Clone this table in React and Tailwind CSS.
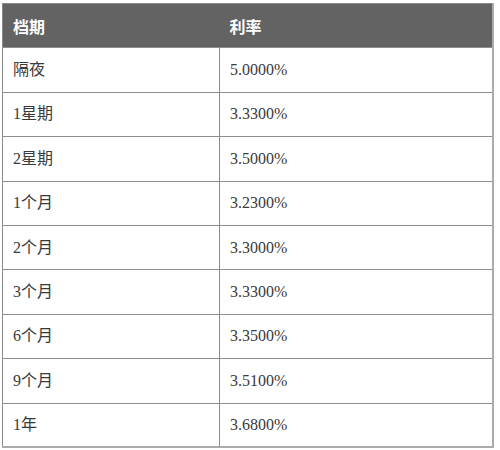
import React from 'react';

const rows = [
    ['隔夜', '5.0000%'],
    ['1星期', '3.3300%'],
    ['2星期', '3.5000%'],
    ['1个月', '3.2300%'],
    ['2个月', '3.3000%'],
    ['3个月', '3.3300%'],
    ['6个月', '3.3500%'],
    ['9个月', '3.5100%'],
    ['1年', '3.6800%'],
];

const cjk = { fontFamily: '"Liberation Serif", "Noto Sans CJK TC", serif' };
const head = { fontFamily: '"Noto Sans CJK TC", sans-serif' };

const App = () => {
    return (
        <div className="w-[500px] h-[450px] bg-white pt-[3px] pl-[2px]">
            <table
                className="w-[492px] border-collapse border-l border-t border-r-2 border-b-2 border-l-[#8a8a8a] border-t-[#8a8a8a] border-r-[#ababab] border-b-[#ababab] text-[16px] text-[#3a3a3a]"
                style={cjk}
            >
                <thead>
                    <tr className="h-[44.4px] bg-[#636363] text-white">
                        <th className="w-[217px] px-[10px] text-left font-bold" style={head}>档期</th>
                        <th className="px-[10px] text-left font-bold" style={head}>利率</th>
                    </tr>
                </thead>
                <tbody>
                    {rows.map(([term, rate]) => (
                        <tr key={term} className="h-[44.4px] border-t border-[#8e8e8e]">
                            <td className="px-[10px] border-r border-[#8e8e8e]">{term}</td>
                            <td className="px-[10px]">{rate}</td>
                        </tr>
                    ))}
                </tbody>
            </table>
        </div>
    );
};

export default App;
